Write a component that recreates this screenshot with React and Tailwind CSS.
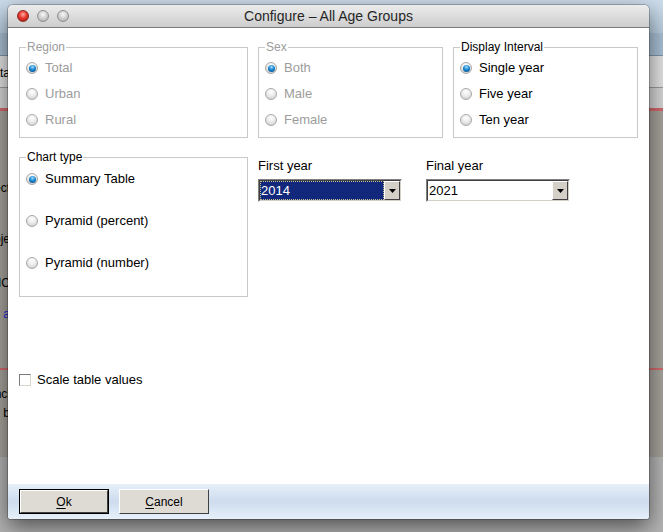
import React from "react";

function Radio({ checked }) {
  return (
    <span className="flex h-[12px] w-[12px] shrink-0 items-center justify-center rounded-full border border-[#a9a9a9] bg-[radial-gradient(circle_at_50%_30%,#ffffff_0%,#ececec_45%,#c6c6c6_100%)]">
      {checked && (
        <span className="h-[7px] w-[7px] rounded-full bg-[radial-gradient(circle_at_50%_30%,#9fe0ff_0%,#1a86d0_45%,#03467f_100%)]" />
      )}
    </span>
  );
}

function Option({ label, checked, disabled }) {
  return (
    <div className={"flex h-[26px] items-center gap-[7px] text-[13px] " + (disabled ? "text-[#9c9c9c]" : "text-black")}>
      <Radio checked={checked} />
      <span>{label}</span>
    </div>
  );
}

function Group({ title, disabled, width, children, className = "" }) {
  return (
    <fieldset className={"m-0 border border-[#c9c9c9] px-[6px] pt-0 " + width + " " + className}>
      <legend className={"px-[1px] text-[12px] leading-[14px] " + (disabled ? "text-[#9c9c9c]" : "text-black")}>{title}</legend>
      {children}
    </fieldset>
  );
}

function Combo({ value, selected }) {
  return (
    <div className="flex h-[23px] border border-t-[#808080] border-l-[#808080] border-r-[#ffffff] border-b-[#ffffff]">
      <div className="flex flex-1 border border-t-[#404040] border-l-[#404040] border-r-[#d4d0c8] border-b-[#d4d0c8] bg-white">
        <div
          className={
            "flex flex-1 items-center pl-[1px] text-[13px] " +
            (selected ? "bg-[#11287d] text-white outline-1 outline-dotted outline-[#c9c38d] -outline-offset-1" : "text-black")
          }
        >
          {value}
        </div>
        <div className="flex w-[16px] items-center justify-center border border-t-[#ffffff] border-l-[#ffffff] border-r-[#404040] border-b-[#404040] bg-[#d4d0c8]">
          <svg width="7" height="4" viewBox="0 0 7 4">
            <path d="M0 0h7L3.5 4z" fill="#000" />
          </svg>
        </div>
      </div>
    </div>
  );
}

function Button({ children, isDefault }) {
  return (
    <div className={"h-[25px] w-[90px] " + (isDefault ? "border border-black" : "")}>
      <div className="flex h-full w-full items-center justify-center border border-t-[#ffffff] border-l-[#ffffff] border-r-[#404040] border-b-[#404040] bg-[#dedad4] text-[12px] text-black">
        {children}
      </div>
    </div>
  );
}

function Peek({ text, className = "", mt }) {
  return (
    <div className={"flex h-[16px] w-[10px] justify-end overflow-hidden whitespace-nowrap text-[12px] leading-[16px] " + mt + " " + className}>
      {text}
    </div>
  );
}

export default function App() {
  return (
    <div className="relative h-[532px] w-[663px] overflow-hidden bg-[#a5a29b] font-['Liberation_Sans',Arial,sans-serif]">
      {/* application behind the dialog */}
      <div className="flex h-full flex-col">
        <div className="h-[33px] bg-gradient-to-b from-[#cddcea] to-[#b8ccdd]" />
        <div className="h-[23px] border-b border-[#7e93a8] bg-[#a8bed2]" />
        <div className="flex h-[32px] items-center border-b border-[#9b9b9b] bg-[#e2e2e2] pt-[3px]">
          <Peek text="Data" mt="" />
        </div>
        <div className="h-[23px] border-b-[3px] border-[#d2686c] bg-[#d4d4d4]" />
        <div className="flex flex-1 flex-col">
          <Peek text="Select" mt="mt-[69px]" />
          <Peek text="Proje" mt="mt-[35px]" />
          <Peek text="IC" mt="mt-[28px]" />
          <Peek text="a" mt="mt-[15px]" className="text-[#2323d8]" />
          <div className="mt-[46px] h-[2px] bg-[#d2686c]" />
          <Peek text="Incl" mt="mt-[16px]" />
          <Peek text="Run b" mt="mt-[3px]" />
        </div>
        <div className="h-[75px] bg-[#b3b3b3]" />
      </div>

      {/* dialog window */}
      <div className="absolute left-[8px] top-[5px] flex h-[514px] w-[641px] flex-col overflow-hidden rounded-t-[5px] rounded-b-[3px] bg-white shadow-[0_0_0_1px_rgba(0,0,0,0.22),0_8px_22px_rgba(0,0,0,0.55)]">
        <div className="relative flex h-[23px] shrink-0 items-center justify-center border-b border-[#7a7a7a] bg-gradient-to-b from-[#ececec] to-[#cdcdcd]">
          <div className="absolute left-[9px] top-[5px] flex gap-[8px]">
            <span className="h-[12px] w-[12px] rounded-full border border-[#8c2a24] bg-[radial-gradient(circle_at_50%_35%,#ffb0a8_0%,#e8382e_45%,#a3140d_100%)]" />
            <span className="h-[12px] w-[12px] rounded-full border border-[#8f8f8f] bg-[radial-gradient(circle_at_50%_35%,#f8f8f8_0%,#cfcfcf_50%,#a6a6a6_100%)]" />
            <span className="h-[12px] w-[12px] rounded-full border border-[#8f8f8f] bg-[radial-gradient(circle_at_50%_35%,#f8f8f8_0%,#cfcfcf_50%,#a6a6a6_100%)]" />
          </div>
          <span className="text-[14px] text-[#262626]">Configure – All Age Groups</span>
        </div>

        <div className="flex flex-1 flex-col px-[11px] pt-[12px]">
          <div className="flex gap-[10px]">
            <Group title="Region" disabled width="w-[229px]" className="pb-[4px]">
              <div className="pt-[1px]">
                <Option label="Total" checked disabled />
                <Option label="Urban" disabled />
                <Option label="Rural" disabled />
              </div>
            </Group>
            <Group title="Sex" disabled width="w-[185px]" className="pb-[4px]">
              <div className="pt-[1px]">
                <Option label="Both" checked disabled />
                <Option label="Male" disabled />
                <Option label="Female" disabled />
              </div>
            </Group>
            <Group title="Display Interval" width="w-[185px]" className="pb-[4px]">
              <div className="pt-[1px]">
                <Option label="Single year" checked />
                <Option label="Five year" />
                <Option label="Ten year" />
              </div>
            </Group>
          </div>

          <div className="mt-[12px] flex gap-[10px]">
            <Group title="Chart type" width="w-[229px]" className="pb-[20px]">
              <div className="flex flex-col gap-[16px] pt-[2px]">
                <Option label="Summary Table" checked />
                <Option label="Pyramid (percent)" />
                <Option label="Pyramid (number)" />
              </div>
            </Group>
            <div className="flex w-[144px] flex-col pt-[8px]">
              <span className="h-[16px] text-[13px] leading-[16px] text-black">First year</span>
              <div className="mt-[5px]">
                <Combo value="2014" selected />
              </div>
            </div>
            <div className="ml-[14px] flex w-[144px] flex-col pt-[8px]">
              <span className="h-[16px] text-[13px] leading-[16px] text-black">Final year</span>
              <div className="mt-[5px]">
                <Combo value="2021" />
              </div>
            </div>
          </div>

          <div className="mt-[75px] flex h-[16px] items-center gap-[6px] text-[13px] text-black">
            <span className="h-[12px] w-[12px] border border-t-[#7a7a7a] border-l-[#7a7a7a] border-r-[#d8d5cf] border-b-[#d8d5cf] bg-white" />
            <span>Scale table values</span>
          </div>
        </div>

        <div className="flex h-[35px] shrink-0 items-start gap-[10px] bg-gradient-to-b from-[#e6eff9] via-[#cddcee] to-[#e6f0fa] pl-[11px] pt-[5px]">
          <Button isDefault>
            <span><span className="underline underline-offset-2">O</span>k</span>
          </Button>
          <Button>
            <span><span className="underline underline-offset-2">C</span>ancel</span>
          </Button>
        </div>
      </div>
    </div>
  );
}
